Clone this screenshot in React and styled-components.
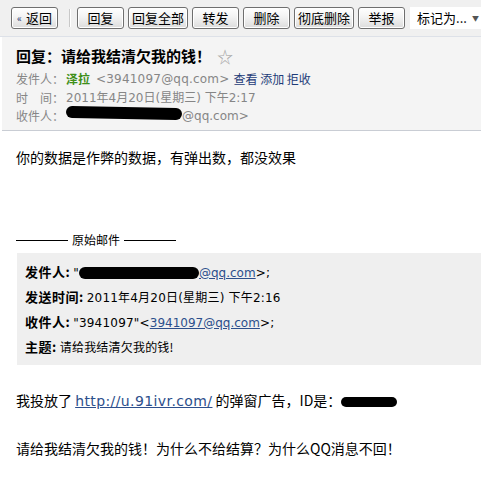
import styled, { createGlobalStyle } from 'styled-components';

const GlobalStyle = createGlobalStyle`
  html, body {
    margin: 0;
    padding: 0;
    background: #fff;
  }
  body {
    font-family: "DejaVu Sans", "Noto Sans CJK SC", sans-serif;
    font-size: 12px;
    color: #000;
  }
`;

const Page = styled.div`
  width: 481px;
  height: 490px;
  overflow: hidden;
`;

const Toolbar = styled.div`
  display: flex;
  align-items: center;
  height: 37px;
  padding-left: 11px;
  background: #f0f0f0;
  border-bottom: 1px solid #dde1e8;
  box-sizing: border-box;
`;

const ToolButton = styled.button`
  height: 22px;
  min-width: 47px;
  padding: 0 3px;
  margin-right: 4px;
  border: 1px solid #6f6f6f;
  border-radius: 3px;
  background: linear-gradient(#ffffff, #f3f3f3 45%, #dcdcdc);
  box-shadow: inset 0 0 0 1px #fff;
  font-family: "Noto Sans CJK SC", sans-serif;
  font-size: 13px;
  line-height: 20px;
  color: #000;
  white-space: nowrap;
`;

const BackArrow = styled.span`
  font-size: 10px;
  color: #1e3c78;
  margin-right: 4px;
  vertical-align: 1px;
`;

const Divider = styled.span`
  width: 1px;
  height: 18px;
  margin: 0 6px 0 7px;
  background: #c8c8c8;
  border-right: 1px solid #fff;
`;

const MarkSelect = styled.div`
  display: flex;
  justify-content: space-between;
  flex: 1;
  height: 22px;
  margin-left: 1px;
  padding-left: 7px;
  background: #fff;
  font-family: "Noto Sans CJK SC", sans-serif;
  font-size: 13px;
  line-height: 22px;
  white-space: nowrap;
`;

const SelectArrow = styled.span`
  font-size: 7px;
  color: #555;
  margin-right: 2px;
`;

const Header = styled.div`
  margin-left: 2px;
  padding: 9px 0 4px 14px;
  background: #f4f4f4;
  border-bottom: 1px solid #c9cdd4;
`;

const Title = styled.div`
  display: flex;
  align-items: center;
  font-family: "Noto Sans CJK SC", sans-serif;
  font-size: 15px;
  font-weight: bold;
  line-height: 20px;
  margin-bottom: 4px;
`;

const Star = styled.span`
  margin-left: 6px;
  font-size: 16px;
  font-weight: normal;
  color: #a8a8a8;
`;

const MetaRow = styled.div`
  display: flex;
  line-height: 18.5px;
  color: #868686;
  white-space: nowrap;
  font-size: 12px;
`;

const MetaLabel = styled.span`
  font-family: "Noto Sans CJK SC", sans-serif;
  color: #868686;
  margin-right: 2px;
`;

const SenderName = styled.span`
  color: #3f8f19;
  font-weight: bold;
  font-family: "Noto Sans CJK SC", sans-serif;
  margin-right: 6px;
`;

const SenderMail = styled.span`
  letter-spacing: 0.2px;
`;

const ActionLink = styled.span`
  color: #1e3c78;
  font-family: "Noto Sans CJK SC", sans-serif;
  margin-left: 4px;
`;

const Blob = styled.span`
  display: inline-block;
  width: ${(p) => p.$w}px;
  height: ${(p) => p.$h || 11}px;
  background: #000;
  border-radius: 8px;
  vertical-align: middle;
  transform: ${(p) => p.$rot || 'none'};
`;

const Body = styled.div`
  padding: 15px 0 0 16px;
  font-family: "Noto Sans CJK SC", sans-serif;
  font-size: 14px;
  line-height: 22px;
`;

const Paragraph = styled.p`
  margin: 0;
  margin-bottom: ${(p) => p.$gap || 0}px;
  white-space: nowrap;
`;

const QuoteRule = styled.div`
  display: flex;
  align-items: center;
  font-size: 12px;
  line-height: 18px;
  margin-bottom: 4px;
`;

const Dash = styled.span`
  width: ${(p) => p.$w}px;
  height: 1px;
  background: #000;
  margin: 1px 4px 0 ${(p) => p.$ml || 0}px;
`;

const QuoteBox = styled.div`
  margin-left: 1px;
  padding: 7px 0 5px 8px;
  background: #efefef;
  font-size: 12px;
  margin-bottom: 24px;
`;

const QuoteRow = styled.div`
  line-height: 24px;
  white-space: nowrap;
  font-family: "DejaVu Sans", "Noto Sans CJK SC", sans-serif;
  letter-spacing: 0.2px;
`;

const QuoteLabel = styled.b`
  font-family: "Noto Sans CJK SC", sans-serif;
  font-size: 13px;
  letter-spacing: 0.5px;
  margin-right: 3px;
`;

const QuoteText = styled.span`
  font-family: "Noto Sans CJK SC", sans-serif;
`;

const Link = styled.a`
  color: #2d4f8c;
  text-decoration: underline;
  font-family: "DejaVu Sans", sans-serif;
  letter-spacing: ${(p) => p.$ls || 0}px;
`;

const buttons = ['回复', '回复全部', '转发', '删除', '彻底删除', '举报'];

const App = () => (
  <Page>
    <GlobalStyle />
    <Toolbar>
      <ToolButton>
        <BackArrow>«</BackArrow>返回
      </ToolButton>
      <Divider />
      {buttons.map((label) => (
        <ToolButton key={label}>{label}</ToolButton>
      ))}
      <MarkSelect>
        标记为...
        <SelectArrow>▼</SelectArrow>
      </MarkSelect>
    </Toolbar>

    <Header>
      <Title>
        回复：请给我结清欠我的钱！<Star>☆</Star>
      </Title>
      <MetaRow>
        <MetaLabel>发件人：</MetaLabel>
        <SenderName>泽拉</SenderName>
        <SenderMail>&lt;3941097@qq.com&gt;</SenderMail>
        <ActionLink>查看 添加 拒收</ActionLink>
      </MetaRow>
      <MetaRow>
        <MetaLabel>时　间：</MetaLabel>
        2011年4月20日(星期三) 下午2:17
      </MetaRow>
      <MetaRow>
        <MetaLabel>收件人：</MetaLabel>
        <Blob $w={116} $h={12} $rot="rotate(1deg)" />
        @qq.com&gt;
      </MetaRow>
    </Header>

    <Body>
      <Paragraph $gap={63}>你的数据是作弊的数据，有弹出数，都没效果</Paragraph>
      <QuoteRule>
        <Dash $w={52} />
        原始邮件
        <Dash $w={52} $ml={4} />
      </QuoteRule>
      <QuoteBox>
        <QuoteRow>
          <QuoteLabel>发件人:</QuoteLabel>"<Blob $w={120} $h={12} />
          <Link>@qq.com</Link>&gt;;
        </QuoteRow>
        <QuoteRow>
          <QuoteLabel>发送时间:</QuoteLabel>2011年4月20日(星期三) 下午2:16
        </QuoteRow>
        <QuoteRow>
          <QuoteLabel>收件人:</QuoteLabel>"3941097"&lt;
          <Link>3941097@qq.com</Link>&gt;;
        </QuoteRow>
        <QuoteRow>
          <QuoteLabel>主题:</QuoteLabel>
          <QuoteText>请给我结清欠我的钱!</QuoteText>
        </QuoteRow>
      </QuoteBox>
      <Paragraph $gap={25}>
        我投放了 <Link $ls={0.4}>http://u.91ivr.com/</Link> 的弹窗广告，ID是：
        <Blob $w={56} $h={10} />
      </Paragraph>
      <Paragraph>请给我结清欠我的钱！为什么不给结算？为什么QQ消息不回！</Paragraph>
    </Body>
  </Page>
);

export default App;
